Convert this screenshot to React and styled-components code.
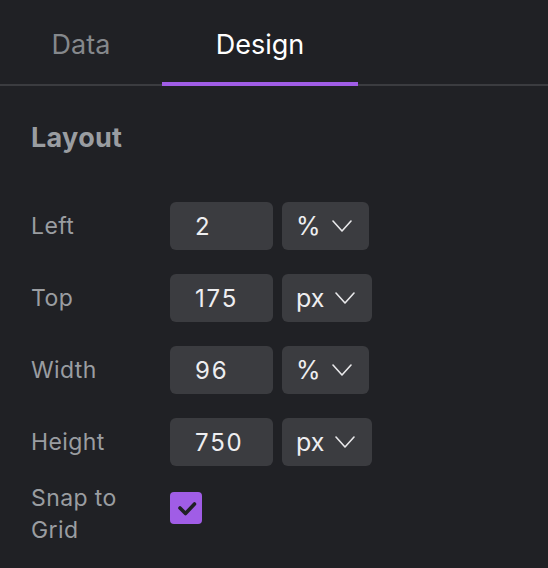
import styled, { createGlobalStyle } from "styled-components";

const GlobalStyle = createGlobalStyle`
  body {
    margin: 0;
    background: #202125;
    font-family: Inter, "Noto Sans", sans-serif;
  }
`;

const rows = [
  { label: "Left", value: "2", unit: "%" },
  { label: "Top", value: "175", unit: "px" },
  { label: "Width", value: "96", unit: "%" },
  { label: "Height", value: "750", unit: "px" },
];

const Chevron = () => (
  <svg width="20" height="12" viewBox="0 0 20 12" fill="none">
    <path d="M1 1l9 10 9-10" stroke="#e8e8ea" strokeWidth="1.6" strokeLinecap="round" strokeLinejoin="round" />
  </svg>
);

const Check = () => (
  <svg width="32" height="32" viewBox="0 0 32 32" fill="none">
    <path d="M10 16l5.5 5.5 9-9.5" stroke="#202125" strokeWidth="3.6" strokeLinecap="round" strokeLinejoin="round" />
  </svg>
);

const App = () => {
  return (
    <Panel>
      <GlobalStyle />
      <TabBar>
        <Tab $width={162}>Data</Tab>
        <Tab $width={196} $active>Design</Tab>
      </TabBar>
      <Section>
        <Heading>Layout</Heading>
        <Rows>
          {rows.map((r) => (
            <Row key={r.label}>
              <Label>{r.label}</Label>
              <Input>{r.value}</Input>
              <Unit>
                {r.unit}
                <Chevron />
              </Unit>
            </Row>
          ))}
        </Rows>
        <SnapRow>
          <Label>
            Snap to
            <br />
            Grid
          </Label>
          <Checkbox>
            <Check />
          </Checkbox>
        </SnapRow>
      </Section>
    </Panel>
  );
};

const Panel = styled.div`
  width: 548px;
  height: 568px;
  background: #202125;
  overflow: hidden;
`;

const TabBar = styled.div`
  display: flex;
  height: 84px;
  border-bottom: 2px solid #3b3c40;
`;

const Tab = styled.div`
  width: ${(p) => p.$width}px;
  display: flex;
  align-items: center;
  justify-content: center;
  padding-top: 4px;
  box-sizing: border-box;
  font-size: 27px;
  color: ${(p) => (p.$active ? "#ffffff" : "#85888c")};
  position: relative;
  &::after {
    content: "";
    display: ${(p) => (p.$active ? "block" : "none")};
    position: absolute;
    left: 0;
    right: 0;
    bottom: -2px;
    height: 4px;
    background: #a05de6;
  }
`;

const Section = styled.div`
  padding: 36px 0 0 31px;
`;

const Heading = styled.div`
  font-size: 27px;
  font-weight: 700;
  letter-spacing: 0.3px;
  color: #9a9da1;
  line-height: 32px;
  margin-bottom: 48px;
`;

const Rows = styled.div`
  display: flex;
  flex-direction: column;
  gap: 24px;
`;

const Row = styled.div`
  display: flex;
  align-items: center;
  height: 48px;
`;

const Label = styled.div`
  width: 139px;
  font-size: 23px;
  letter-spacing: 0.4px;
  line-height: 32px;
  color: #9a9da1;
`;

const Input = styled.div`
  width: 103px;
  height: 48px;
  box-sizing: border-box;
  padding-left: 25px;
  display: flex;
  align-items: center;
  background: #3b3c40;
  border-radius: 6px;
  font-size: 24px;
  letter-spacing: 1.8px;
  color: #eeeef0;
  margin-right: 9px;
`;

const Unit = styled.div`
  height: 48px;
  box-sizing: border-box;
  padding: 0 17px 0 14px;
  display: flex;
  align-items: center;
  gap: 11px;
  background: #3b3c40;
  border-radius: 6px;
  font-size: 25px;
  color: #eeeef0;
`;

const SnapRow = styled.div`
  display: flex;
  align-items: flex-start;
  margin-top: 16px;
`;

const Checkbox = styled.div`
  width: 32px;
  height: 32px;
  margin-top: 10px;
  border-radius: 4px;
  background: #a05de6;
  display: flex;
  align-items: center;
  justify-content: center;
`;

export default App;
